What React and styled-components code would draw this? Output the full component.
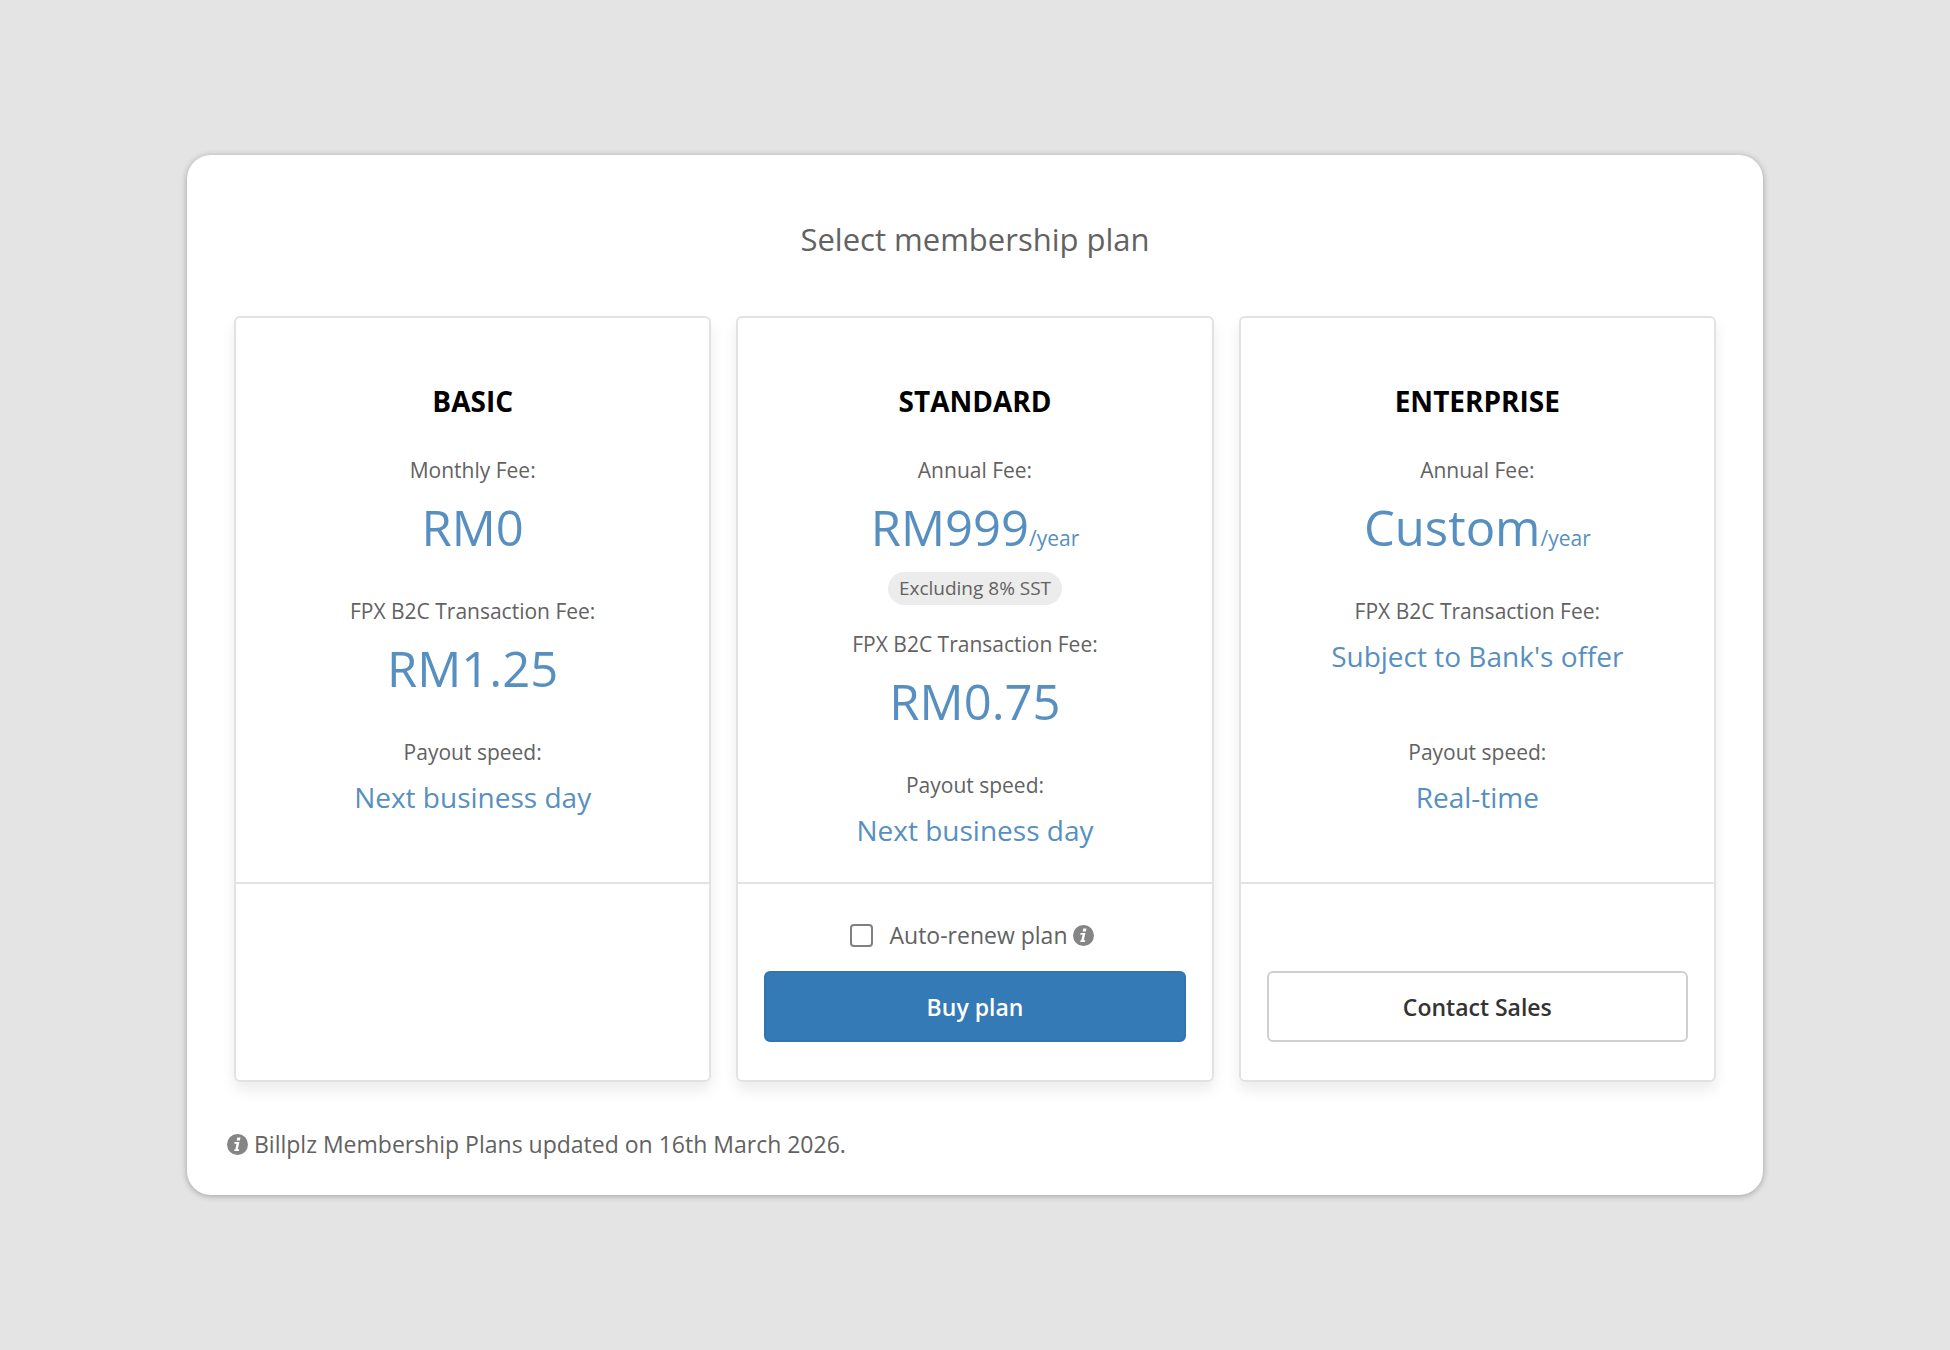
import styled, { createGlobalStyle } from "styled-components"

const GlobalStyle = createGlobalStyle`
    * {
        box-sizing: border-box;
    }

    body {
        margin: 0;
        background-color: #e4e4e4;
        color: #626262;
        font-family: "Open Sans", "Noto Sans", sans-serif;
    }
`

const Page = styled.main`
    display: flex;
    flex-direction: column;
    justify-content: center;
    min-height: 100vh;
    padding: 40px 187px;
`

const Panel = styled.section`
    padding: 62px 47px 35px;
    background-color: #fff;
    border-radius: 24px;
    box-shadow: 0 1px 6px rgba(0, 0, 0, 0.3);
`

const Title = styled.h1`
    margin: 0 0 55px;
    font-size: 31px;
    line-height: 44px;
    font-weight: 400;
    text-align: center;
`

const Plans = styled.div`
    display: grid;
    grid-template-columns: repeat(auto-fit, minmax(320px, 1fr));
    gap: 25px;
`

const Card = styled.article`
    display: flex;
    flex-direction: column;
    border: 2px solid #e2e2e2;
    border-radius: 6px;
    box-shadow: 0 8px 14px rgba(0, 0, 0, 0.08);
    text-align: center;
`

const CardBody = styled.div`
    flex: 1;
    padding: 63px 24px 6px;
`

const PlanName = styled.h2`
    margin: 0 0 34px;
    font-size: 28px;
    line-height: 40px;
    font-weight: 700;
    color: #000;
`

const Fees = styled.dl`
    display: flex;
    flex-direction: column;
    gap: 35px;
    margin: 0;
`

const Label = styled.dt`
    margin-bottom: 8px;
    font-size: 21px;
    line-height: 30px;
`

const Value = styled.dd`
    min-height: 68px;
    margin: 0;
    font-size: ${({ $large }) => ($large ? "49px" : "28px")};
    line-height: ${({ $large }) => ($large ? "68px" : "44px")};
    color: #5790c0;
`

const Period = styled.span`
    font-size: 21px;
    line-height: 1;
`

const Note = styled.dd`
    width: fit-content;
    margin: 11px auto -11px;
    padding: 0 11px;
    border-radius: 17px;
    background-color: #ececec;
    font-size: 19px;
    line-height: 33px;
`

const CardFooter = styled.div`
    display: flex;
    flex-direction: column;
    justify-content: flex-end;
    gap: 20px;
    min-height: 198px;
    padding: 0 26px 38px;
    border-top: 2px solid #e2e2e2;
`

const Renew = styled.label`
    display: flex;
    align-items: center;
    justify-content: center;
    font-size: 23px;
    line-height: 32px;
`

const Checkbox = styled.input`
    appearance: none;
    width: 23px;
    height: 23px;
    margin: 0 17px 0 0;
    border: 2px solid #808080;
    border-radius: 4px;
    background-color: #fff;

    &:checked {
        background-color: #337ab7;
    }
`

const Button = styled.button`
    height: 71px;
    border: 2px solid ${({ $primary }) => ($primary ? "#3075b0" : "#d0d0d0")};
    border-radius: 6px;
    background-color: ${({ $primary }) => ($primary ? "#337ab7" : "#fff")};
    color: ${({ $primary }) => ($primary ? "#fff" : "#333")};
    font-family: inherit;
    font-size: 23px;
    font-weight: 600;
    cursor: pointer;
`

const InfoSvg = styled.svg`
    flex: none;
    width: 21px;
    height: 21px;
    margin: 0 6px;
`

const Notice = styled.p`
    display: flex;
    align-items: center;
    margin: 46px 0 0 -13px;
    font-size: 23px;
    line-height: 32px;
`

const plans = [
    {
        name: "BASIC",
        fees: [
            { label: "Monthly Fee:", value: "RM0", large: true },
            { label: "FPX B2C Transaction Fee:", value: "RM1.25", large: true },
            { label: "Payout speed:", value: "Next business day" },
        ],
    },
    {
        name: "STANDARD",
        fees: [
            { label: "Annual Fee:", value: "RM999", period: "/year", large: true, note: "Excluding 8% SST" },
            { label: "FPX B2C Transaction Fee:", value: "RM0.75", large: true },
            { label: "Payout speed:", value: "Next business day" },
        ],
        renewable: true,
        action: "Buy plan",
        primary: true,
    },
    {
        name: "ENTERPRISE",
        fees: [
            { label: "Annual Fee:", value: "Custom", period: "/year", large: true },
            { label: "FPX B2C Transaction Fee:", value: "Subject to Bank's offer" },
            { label: "Payout speed:", value: "Real-time" },
        ],
        action: "Contact Sales",
    },
]

const InfoIcon = () => {
    return (
        <InfoSvg viewBox="0 0 21 21" aria-hidden="true">
            <circle cx="10.5" cy="10.5" r="10.5" fill="#858585" />
            <path d="M10.3 3.6h3.2l-.6 2.9H9.7zM7.6 8h4.8l-1.6 7.2h1.5l-.4 1.8H7.2l.4-1.8h.8l1.1-5.4H7.2z" fill="#fff" />
        </InfoSvg>
    )
}

const Plan = ({ name, fees, renewable, action, primary }) => {
    return (
        <Card>
            <CardBody>
                <PlanName>{name}</PlanName>
                <Fees>
                    {fees.map((fee) => (
                        <div key={fee.label}>
                            <Label>{fee.label}</Label>
                            <Value $large={fee.large}>
                                {fee.value}
                                {fee.period && <Period>{fee.period}</Period>}
                            </Value>
                            {fee.note && <Note>{fee.note}</Note>}
                        </div>
                    ))}
                </Fees>
            </CardBody>
            <CardFooter>
                {renewable && (
                    <Renew>
                        <Checkbox type="checkbox" />
                        Auto-renew plan
                        <InfoIcon />
                    </Renew>
                )}
                {action && <Button type="button" $primary={primary}>{action}</Button>}
            </CardFooter>
        </Card>
    )
}

const App = () => {
    return (
        <Page>
            <GlobalStyle />
            <Panel>
                <Title>Select membership plan</Title>
                <Plans>
                    {plans.map((plan) => (
                        <Plan key={plan.name} {...plan} />
                    ))}
                </Plans>
                <Notice>
                    <InfoIcon />
                    Billplz Membership Plans updated on 16th March 2026.
                </Notice>
            </Panel>
        </Page>
    )
}

export default App
